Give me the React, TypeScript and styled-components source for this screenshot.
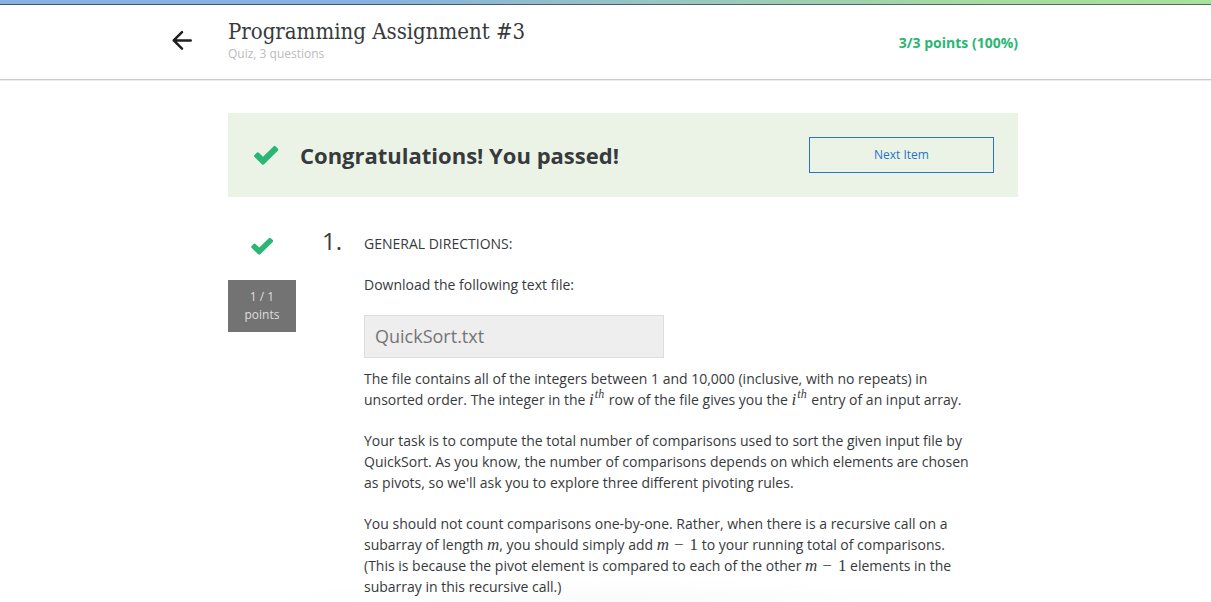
import React from "react";
import styled, { createGlobalStyle } from "styled-components";

const GlobalStyle = createGlobalStyle`
  *, *::before, *::after { box-sizing: border-box; }
  body {
    margin: 0;
    background: #fff;
    color: #373a3c;
    font-family: "Open Sans", "Noto Sans", sans-serif;
    font-size: 14px;
    line-height: 21px;
  }
  h1, h2, p { margin: 0; padding: 0; }
`;

const Page = styled.div`
  min-height: 100vh;
`;

const AccentBar = styled.div`
  height: 5px;
  border-bottom: 1px solid rgba(0, 20, 40, 0.55);
  background: linear-gradient(90deg, #8ab0de 0%, #8ab0de 30%, #a8dba0 82%, #a8e09c 100%);
  background-origin: border-box;
`;

const Header = styled.header`
  border-bottom: 1px solid #ccc;
  box-shadow: 0 1px 0 #ededed;
`;

const Container = styled.div`
  max-width: 895px;
  margin: 0 auto;
  padding: 0 35px 0 70px;
`;

const HeaderRow = styled(Container)`
  display: flex;
  align-items: center;
  height: 74px;
  padding-left: 12px;
`;

const BackLink = styled.a`
  display: flex;
  flex: 0 0 24px;
  margin-right: 34px;
  padding-bottom: 4px;
  color: #1f1f1f;
`;

const Titles = styled.div`
  flex: 1;
  padding-bottom: 3px;
`;

const Title = styled.h1`
  color: #373a3c;
  font-family: "DejaVu Serif Condensed", "DejaVu Serif", serif;
  font-size: 22px;
  font-weight: 400;
  line-height: 26px;
`;

const Subtitle = styled.p`
  color: #bbb;
  font-size: 12px;
  line-height: 18px;
`;

const Score = styled.strong`
  color: #2ab673;
  font-weight: 700;
`;

const Banner = styled.section`
  display: flex;
  align-items: center;
  margin-top: 33px;
  padding: 24px;
  background: #ebf3e7;
`;

const BannerTitle = styled.h2`
  flex: 1;
  margin-left: 20px;
  font-size: 22px;
  font-weight: 700;
  line-height: 36px;
`;

const NextButton = styled.button`
  width: 185px;
  height: 36px;
  border: 1px solid #2a73cc;
  background: transparent;
  color: #2a73cc;
  font: 12px/18px "Open Sans", "Noto Sans", sans-serif;
  cursor: pointer;
`;

const Question = styled.article`
  display: grid;
  grid-template-columns: 90px 46px minmax(0, 1fr);
  margin-top: 36px;
  padding-right: 44px;
`;

const Result = styled.aside`
  display: flex;
  flex-direction: column;
  align-items: center;
  width: 68px;
  padding-top: 3px;
`;

const Points = styled.div`
  width: 100%;
  margin-top: 24px;
  padding: 8px;
  background: #737373;
  color: #dedede;
  font-size: 12px;
  line-height: 18px;
  text-align: center;
`;

const QuestionNumber = styled.div`
  padding-left: 4px;
  font-size: 24px;
  line-height: 16px;
`;

const Body = styled.div`
  display: flex;
  flex-direction: column;
  gap: 20px;
`;

const FileLink = styled.a`
  display: block;
  width: 300px;
  max-width: 100%;
  margin-bottom: -10px;
  padding: 8px 10px;
  border: 1px solid #ddd;
  background: #eee;
  color: #757575;
  font-size: 18px;
  line-height: 25px;
  text-decoration: none;
`;

const MathText = styled.span`
  font-family: "Liberation Serif", "Times New Roman", serif;
  font-size: 17px;
  line-height: 20px;
  white-space: nowrap;
`;

const Exponent = styled.sup`
  margin: 0 1px;
  font-size: 12px;
  line-height: 1px;
`;

const Operator = styled.span`
  margin: 0 6px 0 5px;
`;

const BottomShade = styled.div`
  position: fixed;
  right: 20%;
  bottom: 0;
  left: 20%;
  height: 24px;
  background: radial-gradient(ellipse at 50% 100%, rgba(0, 0, 0, 0.02), transparent 70%);
  pointer-events: none;
`;

const CheckIcon = styled.svg<{ $size: "large" | "small" }>`
  flex: none;
  width: ${({ $size }) => ($size === "large" ? "28px" : "26px")};
  height: ${({ $size }) => ($size === "large" ? "22px" : "20px")};
  fill: #2ab673;
`;

const BackArrow = () => (
  <svg
    width="24"
    height="24"
    viewBox="0 0 24 24"
    fill="none"
    stroke="currentColor"
    strokeWidth="2.5"
    strokeLinecap="round"
    strokeLinejoin="round"
    aria-hidden="true"
  >
    <path d="M20.7 12.4H3.7M12 4.2L3.7 12.4l8.3 8.2" />
  </svg>
);

const Check = ({ size }: { size: "large" | "small" }) => (
  <CheckIcon $size={size} viewBox="-1 -1 28 22" aria-hidden="true">
    <path d="M1.5 9.9 3.7 7.7q1.1-1 2.2 0l4.1 4L20.5 1.4q1.1-1.1 2.2 0L24.8 3.5q1 1.1 0 2.2L11.1 19.2q-1.1 1-2.2 0L1.5 12q-1-1 0-2.1Z" />
  </CheckIcon>
);

const IthTerm = () => (
  <MathText>
    <i>i</i>
    <Exponent>
      <i>th</i>
    </Exponent>
  </MathText>
);

const MMinusOne = () => (
  <MathText>
    <i>m</i>
    <Operator>−</Operator>1
  </MathText>
);

export default function App() {
  return (
    <>
      <GlobalStyle />
      <Page>
        <AccentBar />
        <Header>
          <HeaderRow>
            <BackLink href="#" aria-label="Back">
              <BackArrow />
            </BackLink>
            <Titles>
              <Title>Programming Assignment #3</Title>
              <Subtitle>Quiz, 3 questions</Subtitle>
            </Titles>
            <Score>3/3 points (100%)</Score>
          </HeaderRow>
        </Header>
        <Container as="main">
          <Banner>
            <Check size="large" />
            <BannerTitle>Congratulations! You passed!</BannerTitle>
            <NextButton type="button">Next Item</NextButton>
          </Banner>
          <Question>
            <Result>
              <Check size="small" />
              <Points>
                1 / 1<br />
                points
              </Points>
            </Result>
            <QuestionNumber>1.</QuestionNumber>
            <Body>
              <p>GENERAL DIRECTIONS:</p>
              <p>Download the following text file:</p>
              <FileLink href="#">QuickSort.txt</FileLink>
              <p>
                The file contains all of the integers between 1 and 10,000 (inclusive, with no repeats) in
                unsorted order. The integer in the <IthTerm /> row of the file gives you the <IthTerm /> entry
                of an input array.
              </p>
              <p>
                Your task is to compute the total number of comparisons used to sort the given input file by
                QuickSort. As you know, the number of comparisons depends on which elements are chosen as
                pivots, so we'll ask you to explore three different pivoting rules.
              </p>
              <p>
                You should not count comparisons one-by-one. Rather, when there is a recursive call on a
                subarray of length <MathText><i>m</i></MathText>, you should simply add <MMinusOne /> to your
                running total of comparisons. (This is because the pivot element is compared to each of the
                other <MMinusOne /> elements in the subarray in this recursive call.)
              </p>
            </Body>
          </Question>
        </Container>
        <BottomShade />
      </Page>
    </>
  );
}
